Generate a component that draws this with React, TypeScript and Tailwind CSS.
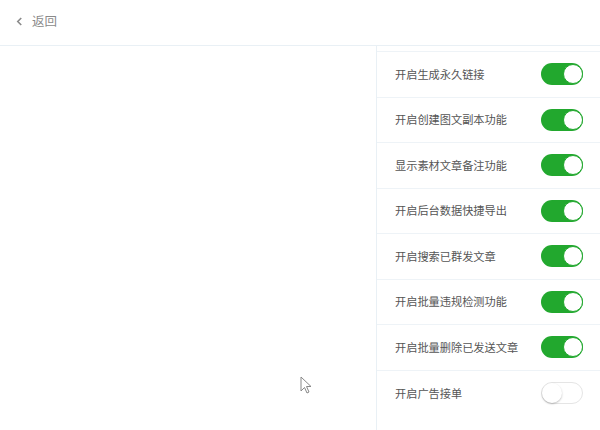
const items = [
  { label: "开启生成永久链接", on: true },
  { label: "开启创建图文副本功能", on: true },
  { label: "显示素材文章备注功能", on: true },
  { label: "开启后台数据快捷导出", on: true },
  { label: "开启搜索已群发文章", on: true },
  { label: "开启批量违规检测功能", on: true },
  { label: "开启批量删除已发送文章", on: true },
  { label: "开启广告接单", on: false },
]

function Toggle({ on }: { on: boolean }) {
  return on ? (
    <div className="flex h-[22px] w-[42px] items-center justify-end rounded-full bg-[#22a82e]">
      <div className="h-[20px] w-[20px] rounded-full border border-[#22a82e] bg-white" />
    </div>
  ) : (
    <div className="flex h-[22px] w-[42px] items-center rounded-full border border-[#e5e5e5] bg-white">
      <div className="h-[20px] w-[20px] rounded-full bg-white shadow-[0_1px_2px_rgba(0,0,0,0.25)]" />
    </div>
  )
}

export default function App() {
  return (
    <div className="relative flex h-[430px] w-[600px] flex-col overflow-hidden bg-white font-['Noto_Sans_CJK_SC',sans-serif]">
      {/* Header */}
      <div className="flex h-[46px] shrink-0 items-center gap-[9px] border-b border-[#e9f0f5] pl-[16px] pb-[2px] text-[12.5px] text-[#8a8a8a]">
        <svg viewBox="0 0 8 10" className="h-[9px] w-[7px]" fill="none" stroke="#8a8a8a" strokeWidth="1.8">
          <polyline points="6 1 2 5 6 9" />
        </svg>
        <span>返回</span>
      </div>

      <div className="flex flex-1">
        <div className="flex-1" />
        {/* Settings panel */}
        <div className="w-[224px] border-l border-[#e9f0f5] pt-[5px]">
          <div className="border-t border-[#eef3f7]">
            {items.map((item, i) => (
              <div
                key={item.label}
                className={
                  "flex h-[45.5px] items-center justify-between pl-[18px] pr-[17px] " +
                  (i < items.length - 1 ? "border-b border-[#eef3f7]" : "")
                }
              >
                <span className="text-[11.2px] text-[#555]">{item.label}</span>
                <Toggle on={item.on} />
              </div>
            ))}
          </div>
        </div>
      </div>

      {/* Mouse cursor */}
      <svg viewBox="0 0 12 18" className="absolute left-[300px] top-[376px] h-[18px] w-[12px]">
        <path d="M1 1 L1 15 L4.5 11.5 L7 17 L9 16 L6.5 10.5 L11 10.5 Z" fill="white" stroke="#888" strokeWidth="1" />
      </svg>
    </div>
  )
}
